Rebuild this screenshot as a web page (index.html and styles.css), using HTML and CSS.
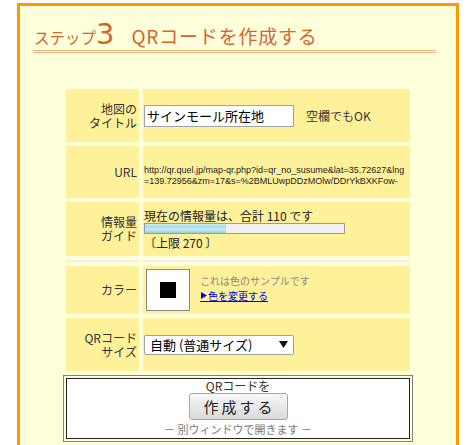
FILE: index.html
```html
<!DOCTYPE html>
<html lang="ja">
<head>
<meta charset="utf-8">
<title>ステップ3 QRコードを作成する</title>
<link rel="stylesheet" href="styles.css">
</head>
<body>
<div class="page">
  <h2 class="heading"><span class="step">ステップ</span><span class="num">3</span><span class="title">QRコードを作成する</span></h2>

  <div class="form">
    <div class="label">地図の<br>タイトル</div>
    <div class="value">
      <input class="text-input" type="text" value="サインモール所在地">
      <span class="hint">空欄でもOK</span>
    </div>

    <div class="label">URL</div>
    <div class="value url">http://qr.quel.jp/map-qr.php?id=qr_no_susume&amp;lat=35.72627&amp;lng=139.72956&amp;zm=17&amp;s=%2BMLUwpDDzMOlw/DDrYkBXKFow-</div>

    <div class="label">情報量<br>ガイド</div>
    <div class="value info">
      <div class="info-text">現在の情報量は、合計 110 です</div>
      <div class="bar"><div class="fill" style="width:40.7%"></div></div>
      <div class="info-text">〔上限 270 〕</div>
    </div>

    <div class="sep"></div>
    <div class="sep"></div>

    <div class="label">カラー</div>
    <div class="value color">
      <div class="swatch"><div class="swatch-dot"></div></div>
      <div class="color-text">
        <div class="sample-note">これは色のサンプルです</div>
        <a class="change-link" href="#"><svg class="tri" width="6" height="7" viewBox="0 0 6 7"><path d="M0 0 L6 3.5 L0 7 Z" fill="#0000ee"/></svg>色を変更する</a>
      </div>
    </div>

    <div class="label">QRコード<br>サイズ</div>
    <div class="value">
      <div class="select"><span>自動 (普通サイズ)</span><svg class="arrow" width="9" height="7" viewBox="0 0 9 7"><path d="M0 0 L9 0 L4.5 7 Z" fill="#111"/></svg></div>
    </div>
  </div>

  <div class="submit-box">
    <div class="submit-inner">
      <div class="submit-pre">QRコードを</div>
      <button class="submit-btn" type="button">作成する</button>
      <div class="submit-note">－ 別ウィンドウで開きます －</div>
    </div>
  </div>
</div>
</body>
</html>
```

FILE: styles.css
```css
body {
  margin: 0;
  background: #ffffff;
  font-family: "Noto Sans CJK JP", sans-serif;
  color: #333333;
}

.page {
  margin: 3px 0 0 17px;
  width: 436px;
  min-height: 460px;
  border: 3px solid #ff9900;
  border-bottom: none;
  background: #ffffdb;
}

.heading {
  margin: 0 20px 0 13px;
  height: 47px;
  box-sizing: border-box;
  padding-top: 13px;
  border-bottom: 3px double #f3b57c;
  display: flex;
  align-items: baseline;
  font-weight: normal;
  color: #d5662b;
  line-height: 30px;
}

.step {
  font-size: 15.5px;
  letter-spacing: 0;
  padding-left: 1px;
}

.num {
  font-family: "DejaVu Sans", sans-serif;
  font-size: 29px;
  margin-left: 0;
}

.title {
  font-size: 19px;
  letter-spacing: 0.8px;
  margin-left: 17px;
}

.form {
  margin: 36px 0 0 46px;
  width: 344px;
  display: grid;
  grid-template-columns: 73px 267px;
  grid-template-rows: 53px 52px 54px 2px 48px 53px;
  gap: 4px;
}

.label {
  background: #fff19a;
  display: flex;
  align-items: center;
  justify-content: flex-end;
  text-align: right;
  padding-right: 2px;
  font-size: 12px;
  line-height: 14px;
  color: #333;
}

.value {
  background: #fff19a;
  display: flex;
  align-items: center;
  padding-left: 1px;
  font-size: 12px;
  color: #333;
}

.sep {
  background: #eeeeea;
}

.text-input {
  width: 150px;
  height: 22px;
  box-sizing: border-box;
  border: 1px solid #a2a2a2;
  background: #ffffff;
  padding: 0 2px;
  margin: 0;
  font-family: "Noto Sans CJK JP", sans-serif;
  font-size: 13px;
  color: #000;
}

.hint {
  margin-left: 12px;
  font-size: 12px;
  color: #333;
}

.url {
  font-family: "Liberation Sans", sans-serif;
  font-size: 9px;
  line-height: 11px;
  color: #222;
  word-break: break-all;
  padding-top: 7px;
  padding-right: 3px;
}

.info {
  flex-direction: column;
  align-items: flex-start;
  justify-content: center;
}

.info-text {
  font-size: 12px;
  line-height: 12px;
  color: #222;
}

.bar {
  width: 201px;
  height: 11px;
  box-sizing: border-box;
  border: 1px solid #9a9a9a;
  background: #f0f0f0;
  margin: 1px 0 3px;
}

.fill {
  height: 100%;
  background: linear-gradient(#cfeef3 0%, #a3dbe5 35%, #c6ecf1 60%, #9ccbd4 100%);
}

.color {
  padding-left: 3px;
}

.swatch {
  width: 44px;
  height: 42px;
  box-sizing: border-box;
  border: 1px solid #888;
  background: #fff;
  display: flex;
  align-items: center;
  justify-content: center;
}

.swatch-dot {
  width: 16px;
  height: 16px;
  background: #000;
}

.color-text {
  margin-left: 10px;
  display: flex;
  flex-direction: column;
  align-items: flex-start;
  gap: 3px;
  margin-top: -3px;
}

.sample-note {
  font-size: 10px;
  line-height: 12px;
  color: #888;
}

.change-link {
  font-size: 10px;
  line-height: 11px;
  color: #0000ee;
  text-decoration: none;
  border-bottom: 1px solid #0000ee;
  display: inline-flex;
  align-items: center;
  gap: 1px;
  padding-left: 1px;
}

.tri {
  display: block;
}

.select {
  width: 150px;
  height: 20px;
  box-sizing: border-box;
  border: 1px solid #a0a0a0;
  border-radius: 2px;
  background: #fff;
  display: flex;
  align-items: center;
  justify-content: space-between;
  padding: 0 5px 0 5px;
  font-size: 13px;
  color: #000;
}

.arrow {
  display: block;
}

.submit-box {
  margin: 4px 0 0 43px;
  width: 350px;
  box-sizing: border-box;
  border: 1px solid #808080;
  padding: 2px;
}

.submit-inner {
  border: 1px solid #222;
  background: #fff;
  height: 61px;
  box-sizing: border-box;
  text-align: center;
}

.submit-pre {
  font-size: 12px;
  line-height: 14px;
  color: #333;
}

.submit-btn {
  display: block;
  margin: 0 auto;
  width: 99px;
  height: 27px;
  box-sizing: border-box;
  border: 1px solid #a8a8a8;
  border-radius: 3px;
  background: linear-gradient(#f7f7f7, #dadada);
  font-family: "Noto Sans CJK JP", sans-serif;
  font-size: 15px;
  letter-spacing: 3px;
  padding: 0 0 0 3px;
  color: #222;
}

.submit-note {
  margin-top: 3px;
  font-size: 11px;
  line-height: 13px;
  color: #777;
}
```
